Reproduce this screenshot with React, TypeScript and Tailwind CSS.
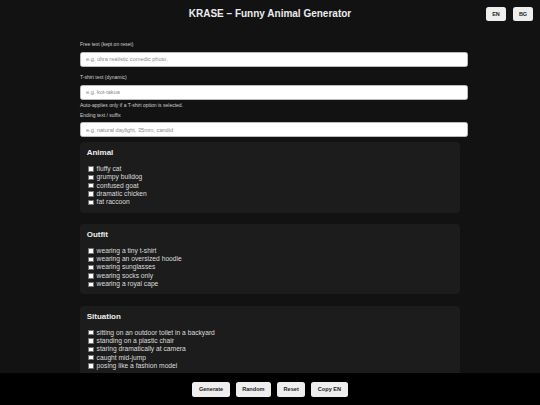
import React from "react";

const sections: { title: string; items: string[] }[] = [
  {
    title: "Animal",
    items: ["fluffy cat", "grumpy bulldog", "confused goat", "dramatic chicken", "fat raccoon"],
  },
  {
    title: "Outfit",
    items: [
      "wearing a tiny t-shirt",
      "wearing an oversized hoodie",
      "wearing sunglasses",
      "wearing socks only",
      "wearing a royal cape",
    ],
  },
  {
    title: "Situation",
    items: [
      "sitting on an outdoor toilet in a backyard",
      "standing on a plastic chair",
      "staring dramatically at camera",
      "caught mid-jump",
      "posing like a fashion model",
    ],
  },
];

function Field({ label, placeholder }: { label: string; placeholder: string }) {
  return (
    <div className="flex flex-col">
      <div className="text-[5px] leading-[6px] text-[#cfcfcf]">{label}</div>
      <input
        placeholder={placeholder}
        className="mt-[4.5px] h-[15px] w-[388px] rounded-[2.5px] border-[0.5px] border-[#bbbbbb] bg-white px-[5px] text-[5.6px] text-[#222] outline-none placeholder:text-[#8a8a8a]"
      />
    </div>
  );
}

function Card({ title, items }: { title: string; items: string[] }) {
  return (
    <div className="rounded-[4px] bg-[#1c1c1c] px-[6.67px] pb-[6px] pt-[6px]">
      <div className="text-[8px] font-bold leading-[9.33px] text-[#ececec]">{title}</div>
      <div className="mt-[7.6px] flex flex-col">
        {items.map((it) => (
          <div key={it} className="flex h-[8.33px] items-center">
            <span className="ml-[1.67px] box-border h-[5.3px] w-[5.3px] rounded-[0.8px] border-[0.5px] border-[#767676] bg-white" />
            <span className="ml-[3px] text-[6.7px] leading-[8.33px] text-[#dddddd]">{it}</span>
          </div>
        ))}
      </div>
    </div>
  );
}

export default function App() {
  return (
    <div
      className="min-h-[405px] bg-[#121212] pb-[60px]"
      style={{ fontFamily: '"Liberation Sans", Arial, sans-serif' }}
    >
      <header className="grid grid-cols-[1fr_auto_1fr] items-center px-[7px] pt-[7px]">
        <div />
        <h1 className="h-[14px] text-[10px] font-bold leading-[14px] text-[#ececec]">
          KRASE – Funny Animal Generator
        </h1>
        <div className="flex justify-end gap-[7px]">
          <button className="h-[14px] w-[20px] rounded-[2.5px] bg-[#eeeeee] text-[5.5px] font-bold text-[#222]">
            EN
          </button>
          <button className="h-[14px] w-[20px] rounded-[2.5px] bg-[#eeeeee] text-[5.5px] font-bold text-[#222]">
            BG
          </button>
        </div>
      </header>

      <main className="mx-auto mt-[20px] flex w-[380px] flex-col">
        <Field label="Free text (kept on reset)" placeholder="e.g. ultra realistic comedic photo," />
        <div className="mt-[7.8px]">
          <Field label="T-shirt text (dynamic)" placeholder="e.g. kot-takoa" />
        </div>
        <div className="mt-[2.3px] text-[5px] leading-[6px] text-[#cfcfcf]">
          Auto-applies only if a T-shirt option is selected.
        </div>
        <div className="mt-[3.7px]">
          <Field label="Ending text / suffix" placeholder="e.g. natural daylight, 35mm, candid" />
        </div>

        <div className="mt-[4.7px] flex flex-col gap-[11.3px]">
          {sections.map((s) => (
            <Card key={s.title} title={s.title} items={s.items} />
          ))}
        </div>
      </main>

      <footer className="fixed bottom-0 left-0 right-0 flex h-[31.7px] items-center justify-center gap-[6px] bg-black">
        {["Generate", "Random", "Reset", "Copy EN"].map((b) => (
          <button
            key={b}
            className="h-[15px] rounded-[2.5px] bg-[#eeeeee] px-[6.5px] text-[5.6px] font-bold text-[#222]"
          >
            {b}
          </button>
        ))}
      </footer>
    </div>
  );
}
